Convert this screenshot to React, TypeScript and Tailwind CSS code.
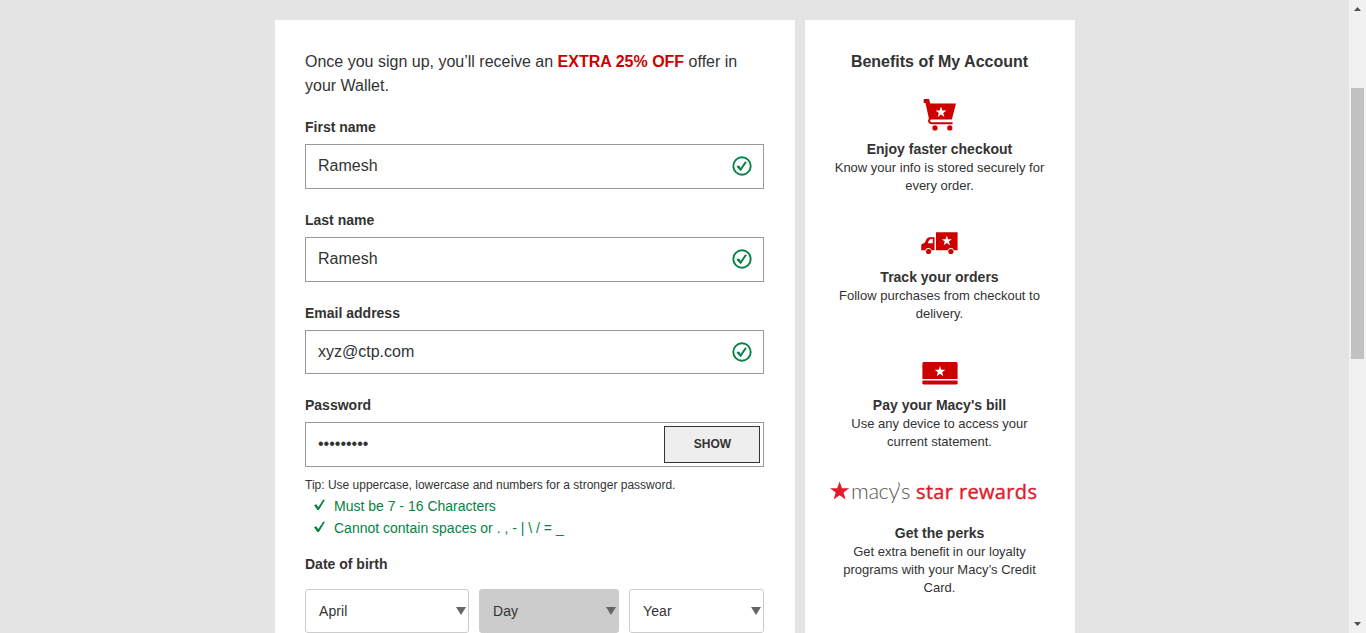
import React from "react";

const STAR = "M0 -5.4 L1.3 -1.7 L5.2 -1.7 L2.1 0.7 L3.2 4.5 L0 2.2 L-3.2 4.5 L-2.1 0.7 L-5.2 -1.7 L-1.3 -1.7 Z";

function CircleCheck() {
  return (
    <svg width="20" height="20" viewBox="0 0 20 20" fill="none" stroke="#078244" className="mb-px shrink-0">
      <circle cx="10" cy="10" r="8.7" strokeWidth="1.9" />
      <path d="M5.7 10.6 L8.6 13.7 L14 5.8" strokeWidth="2" />
      <path d="M4.8 10.3 L7 10.3 L8.7 13" strokeWidth="1.3" />
    </svg>
  );
}

function Tick() {
  return (
    <svg width="12" height="12" viewBox="0 0 12 12" className="mb-0.5 shrink-0" fill="#078244">
      <path d="M0 6.2 L2.4 5.3 L4.2 8.2 L9.1 0.8 L11 0.8 L4.9 11 L3.4 11 Z" />
    </svg>
  );
}

function Caret() {
  return (
    <svg width="10" height="8" viewBox="0 0 10 8" className="shrink-0">
      <path d="M0 0 H10 L5 8 Z" fill="#666" />
    </svg>
  );
}

function CartIcon() {
  return (
    <svg width="36" height="34" viewBox="-1 0 36 34" fill="#c00">
      <path d="M1.7 1 H7 L8.3 5.4 H34 L29.8 21.4 H8.7 L8.1 22.4 Q8 23.8 9.6 24.2 H30.6 V26.3 H9.4 Q5.9 25.6 6.1 22.3 L6.9 20.4 L3.5 5.1 H1.7 Z" />
      <circle cx="13" cy="29.9" r="2.6" />
      <circle cx="27.8" cy="29.9" r="2.6" />
      <path d={STAR} transform="translate(19 14.2) scale(1.06)" fill="#fff" />
    </svg>
  );
}

function TruckIcon() {
  return (
    <svg width="38" height="24" viewBox="1 0 38 24" fill="#c00">
      <path d="M16 1.2 H37.6 V19.3 H34.1 A3.4 3.4 0 0 0 27.7 19.3 H16 Z" />
      <path d="M14.5 6.2 H9.3 Q7.3 6.5 6.3 8.6 L4.8 11.7 L2 13 Q1.2 13.5 1.2 15 V19.3 H5.2 A3.4 3.4 0 0 1 11.6 19.3 H14.5 Z" />
      <path d="M12.8 7.9 H10.6 Q9.4 8.4 8.7 10 L7.8 12.2 H12.8 Z" fill="#fff" />
      <circle cx="8.6" cy="20.5" r="2.6" />
      <circle cx="30.9" cy="20.5" r="2.6" />
      <path d={STAR} transform="translate(26.8 9.8) scale(.98)" fill="#fff" />
    </svg>
  );
}

function BillIcon() {
  return (
    <svg width="36" height="24" viewBox="0 0 36 24" fill="#c00">
      <path d="M1.7 1 H34.3 Q35.6 1 35.6 2.5 V18 H.4 V2.5 Q.4 1 1.7 1 Z" />
      <path d="M.4 19.5 H35.6 V22.2 Q35.4 23.5 34 23.5 H2 Q.6 23.5 .4 22.2 Z" />
      <path d={STAR} transform="translate(18 10.6) scale(1.02)" fill="#fff" />
    </svg>
  );
}

function RewardsLogo() {
  return (
    <svg width="220" height="30" viewBox="0 0 220 30">
      <path d={STAR} transform="translate(9.6 13.3) scale(1.86 1.83)" fill="#e21a2c" />
      <text x="21 38.5 48.5 58.5 66.5 71" y="21" className="font-['Lato',sans-serif] text-[22px] font-light" fill="#555">
        macy’s
      </text>
      <text x="86" y="20.5" textLength="121" lengthAdjust="spacing" className="font-['Open_Sans','Noto_Sans',sans-serif] text-[20px] font-normal" fill="#e21a2c" stroke="#e21a2c" strokeWidth="0.4">
        star rewards
      </text>
    </svg>
  );
}

function Field({ label, value, className, boxClass }: { label: string; value: string; className: string; boxClass: string }) {
  return (
    <div className={className}>
      <label className="block h-[27px] text-sm leading-5 font-bold">{label}</label>
      <div className={`flex w-[459px] items-center border border-[#999] pr-[11px] pl-3 ${boxClass}`}>
        <input className="min-w-0 flex-1 pb-px text-base outline-none" defaultValue={value} />
        <CircleCheck />
      </div>
    </div>
  );
}

function Picker({ text, className }: { text: string; className: string }) {
  return (
    <div className={`flex h-11 items-center justify-between rounded-[3px] border border-[#ccc] pl-[13px] text-sm tracking-[0.1px] ${className}`}>
      <span>{text}</span>
      <Caret />
    </div>
  );
}

function Benefit({ icon, title, lines, className }: { icon: React.ReactNode; title: string; lines: string[]; className: string }) {
  return (
    <div className={`flex flex-col items-center ${className}`}>
      {icon}
      <h3 className="mt-auto mb-px text-sm leading-[18px] font-bold">{title}</h3>
      {lines.map((l) => (
        <p key={l} className="text-[13px] leading-[18px] whitespace-nowrap">{l}</p>
      ))}
    </div>
  );
}

export default function App() {
  return (
    <div className="flex h-[633px] w-[1366px] overflow-hidden bg-[#e4e4e4] font-['Liberation_Sans',Arial,sans-serif] text-[#333]">
      <main className="flex flex-1 items-start justify-center gap-2.5 pt-5 pl-px">
        <section className="h-[613px] w-[520px] bg-white px-[30px] pt-[30px]">
          <p className="text-base leading-6">
            Once you sign up, you’ll receive an <b className="text-[#c00]">EXTRA 25% OFF</b> offer in
            <br />
            your Wallet.
          </p>
          <Field label="First name" value="Ramesh" className="mt-[19px]" boxClass="h-[45px]" />
          <Field label="Last name" value="Ramesh" className="mt-[21px]" boxClass="h-[45px]" />
          <Field label="Email address" value="xyz@ctp.com" className="mt-[21px]" boxClass="h-11" />
          <div className="mt-[21px]">
            <label className="block h-[27px] text-sm leading-5 font-bold">Password</label>
            <div className="flex h-[45px] w-[459px] items-center border border-[#999] pr-[3px] pl-3">
              <input type="password" className="min-w-0 flex-1 pb-0.5 text-base outline-none" defaultValue="Ramesh123" />
              <button className="h-[37px] w-24 border border-[#333] bg-[#eee] pb-0.5 pl-px text-xs font-bold">SHOW</button>
            </div>
          </div>
          <p className="mt-[9px] text-xs leading-[18px]">Tip: Use uppercase, lowercase and numbers for a stronger password.</p>
          <ul className="mt-px pl-[9px] text-sm leading-[22px] text-[#078244]">
            <li className="flex items-center gap-2"><Tick />Must be 7 - 16 Characters</li>
            <li className="flex items-center gap-2"><Tick />Cannot contain spaces or . , - | \ / = _</li>
          </ul>
          <h2 className="mt-[15px] text-sm leading-5 font-bold">Date of birth</h2>
          <div className="mt-[15px] flex gap-2.5">
            <Picker text="April" className="w-[164px] pr-[2px]" />
            <Picker text="Day" className="w-[140px] bg-[#ccc] pr-[2px]" />
            <Picker text="Year" className="w-[135px] pr-[2px]" />
          </div>
        </section>
        <aside className="flex h-[613px] w-[270px] flex-col items-center bg-white pt-[30px] pr-px">
          <h2 className="text-base leading-6 font-bold">Benefits of My Account</h2>
          <Benefit className="mt-6 h-[97px]" icon={<CartIcon />} title="Enjoy faster checkout" lines={["Know your info is stored securely for", "every order."]} />
          <Benefit className="mt-9 h-[92px]" icon={<TruckIcon />} title="Track your orders" lines={["Follow purchases from checkout to", "delivery."]} />
          <Benefit className="mt-[38px] h-[90px]" icon={<BillIcon />} title="Pay your Macy's bill" lines={["Use any device to access your", "current statement."]} />
          <Benefit className="mt-[27px] h-[119px]" icon={<RewardsLogo />} title="Get the perks" lines={["Get extra benefit in our loyalty", "programs with your Macy’s Credit", "Card."]} />
        </aside>
      </main>
      <div className="flex w-[17px] flex-col items-center bg-[#f1f1f1]">
        <svg width="7" height="4" viewBox="0 0 7 4" className="mt-[7px]"><path d="M0 4 L3.5 0 L7 4 Z" fill="#505050" /></svg>
        <div className="mt-[77px] h-[271px] w-[13px] bg-[#c1c1c1]" />
        <svg width="7" height="4" viewBox="0 0 7 4" className="mt-auto mb-[7px]"><path d="M0 0 L3.5 4 L7 0 Z" fill="#505050" /></svg>
      </div>
    </div>
  );
}
